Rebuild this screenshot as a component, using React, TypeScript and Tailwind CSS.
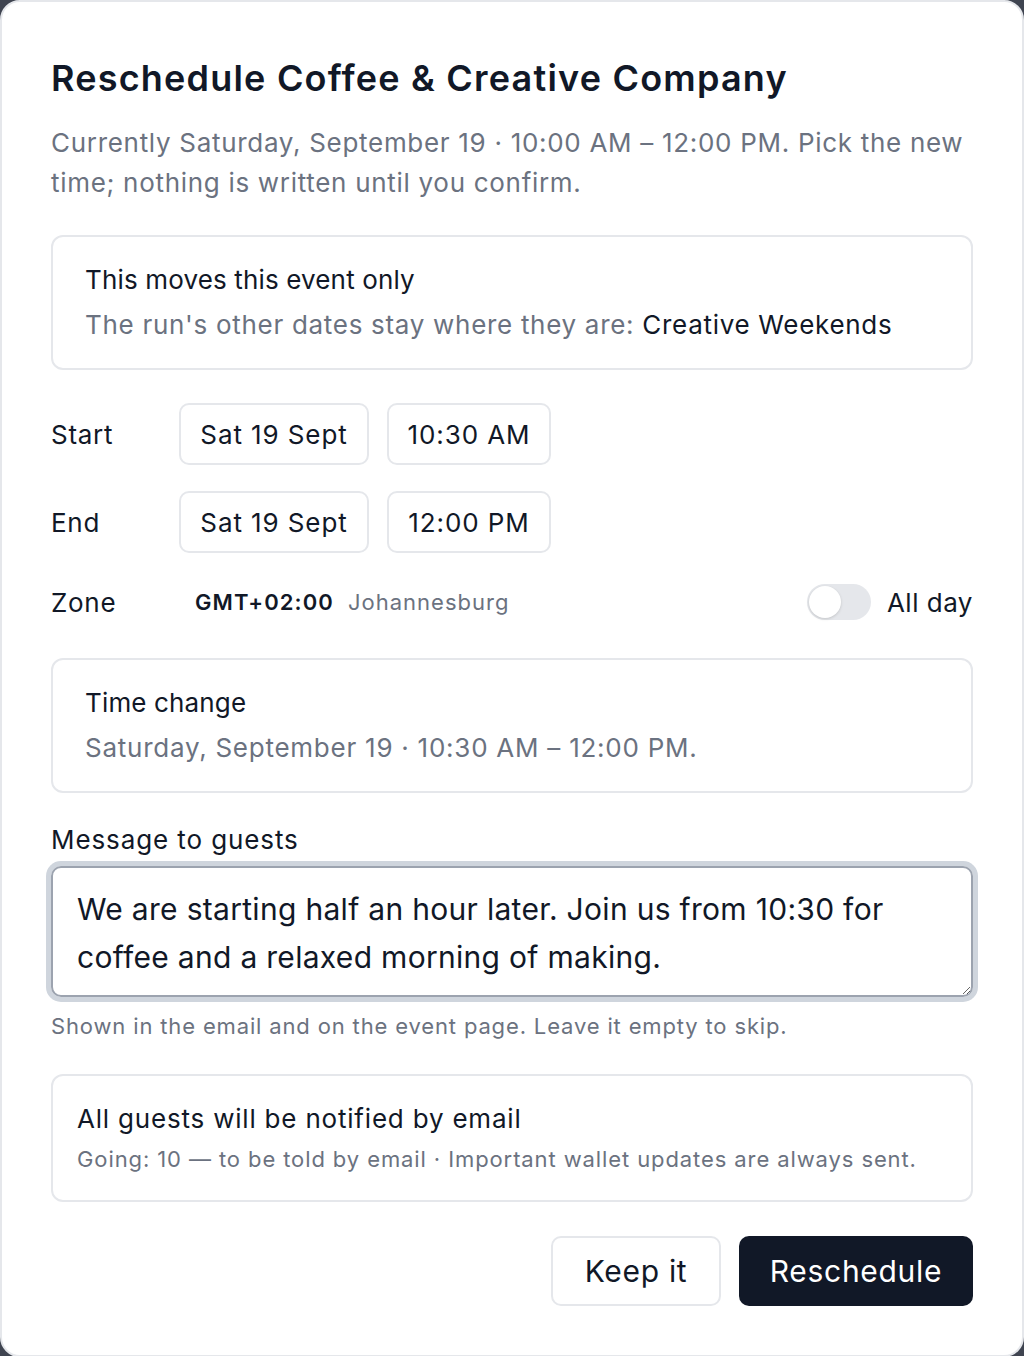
export default function App() {
  return (
    <div className="min-h-[1356px] bg-[#3f4450] font-['Inter','Noto_Sans',sans-serif] text-[#111827]">
      <div className="flex min-h-[1356px] flex-col rounded-[20px] border-2 border-[#e5e7eb] bg-white px-[49px] pt-[54px] pb-[49px]">
        {/* Header */}
        <h1 className="text-[36px] leading-[44px] font-semibold tracking-[1.2px]">
          Reschedule Coffee &amp; Creative Company
        </h1>
        <p className="mt-[23px] text-[26px] leading-[40px] tracking-[0.7px] text-[#6b7280]">
          Currently Saturday, September 19 · 10:00 AM – 12:00 PM. Pick the new time; nothing is written until you confirm.
        </p>

        {/* Series note */}
        <div className="mt-[32px] rounded-[12px] border-2 border-[#e5e7eb] px-[32px] py-[23px]">
          <div className="text-[26px] leading-[40px] tracking-[0.15px]">This moves this event only</div>
          <div className="mt-[5px] text-[26px] leading-[40px] tracking-[0.7px] text-[#6b7280]">
            The run's other dates stay where they are: <span className="text-[#111827]">Creative Weekends</span>
          </div>
        </div>

        {/* Date / time rows */}
        <div className="mt-[33px] flex flex-col gap-[26px]">
          {[
            { label: 'Start', date: 'Sat 19 Sept', time: '10:30 AM' },
            { label: 'End', date: 'Sat 19 Sept', time: '12:00 PM' },
          ].map((row) => (
            <div key={row.label} className="flex items-center">
              <div className="w-[128px] text-[26px] tracking-[0.7px]">{row.label}</div>
              <div className="flex gap-[18px]">
                <button className="h-[62px] w-[190px] rounded-[10px] border-2 border-[#e5e7eb] bg-white text-[26px] tracking-[0.9px]">
                  {row.date}
                </button>
                <button className="h-[62px] w-[164px] rounded-[10px] border-2 border-[#e5e7eb] bg-white text-[26px] tracking-[0.9px]">
                  {row.time}
                </button>
              </div>
            </div>
          ))}
        </div>

        {/* Zone */}
        <div className="mt-[29px] flex h-[40px] items-center">
          <div className="w-[144px] text-[26px] tracking-[0.7px]">Zone</div>
          <div className="flex flex-1 items-baseline gap-[14px]">
            <span className="text-[22px] font-semibold tracking-[1.1px]">GMT+02:00</span>
            <span className="text-[22px] tracking-[1px] text-[#6b7280]">Johannesburg</span>
          </div>
          <div className="flex items-center gap-[16px]">
            <div className="flex h-[36px] w-[64px] items-center rounded-full bg-[#e5e7eb] px-[2px]">
              <div className="h-[32px] w-[32px] rounded-full bg-white shadow-[0_1px_3px_rgba(0,0,0,0.15)]" />
            </div>
            <span className="text-[26px] tracking-[0.5px]">All day</span>
          </div>
        </div>

        {/* Time change summary */}
        <div className="mt-[36px] rounded-[12px] border-2 border-[#e5e7eb] px-[32px] py-[23px]">
          <div className="text-[26px] leading-[40px] tracking-[0.15px]">Time change</div>
          <div className="mt-[5px] text-[26px] leading-[40px] tracking-[0.75px] text-[#6b7280]">
            Saturday, September 19 · 10:30 AM – 12:00 PM.
          </div>
        </div>

        {/* Message */}
        <label className="mt-[27px] text-[26px] leading-[40px] tracking-[0.9px]">Message to guests</label>
        <textarea
          className="mt-[6px] h-[131px] w-full resize-y rounded-[10px] border-2 border-[#9ca3af] px-[24px] pt-[17px] text-[30px] leading-[48px] tracking-[0.3px] text-[#111827] outline-none ring-[5px] ring-[#cfd5dd]"
          defaultValue="We are starting half an hour later. Join us from 10:30 for coffee and a relaxed morning of making."
        />
        <p className="mt-[13px] text-[22px] leading-[32px] tracking-[0.85px] text-[#6b7280]">
          Shown in the email and on the event page. Leave it empty to skip.
        </p>

        {/* Notification */}
        <div className="mt-[32px] rounded-[12px] border-2 border-[#e5e7eb] px-[24px] py-[23px]">
          <div className="text-[26px] leading-[40px] tracking-[0.8px]">All guests will be notified by email</div>
          <div className="mt-[2px] text-[22px] leading-[36px] tracking-[0.9px] text-[#6b7280]">
            Going: 10 — to be told by email · Important wallet updates are always sent.
          </div>
        </div>

        {/* Actions */}
        <div className="mt-[34px] flex justify-end gap-[18px]">
          <button className="h-[70px] w-[170px] rounded-[10px] border-2 border-[#e5e7eb] bg-white text-[30px] tracking-[0.7px]">
            Keep it
          </button>
          <button className="h-[70px] w-[234px] rounded-[10px] bg-[#111827] text-[30px] tracking-[0.7px] text-white">
            Reschedule
          </button>
        </div>
      </div>
    </div>
  );
}
